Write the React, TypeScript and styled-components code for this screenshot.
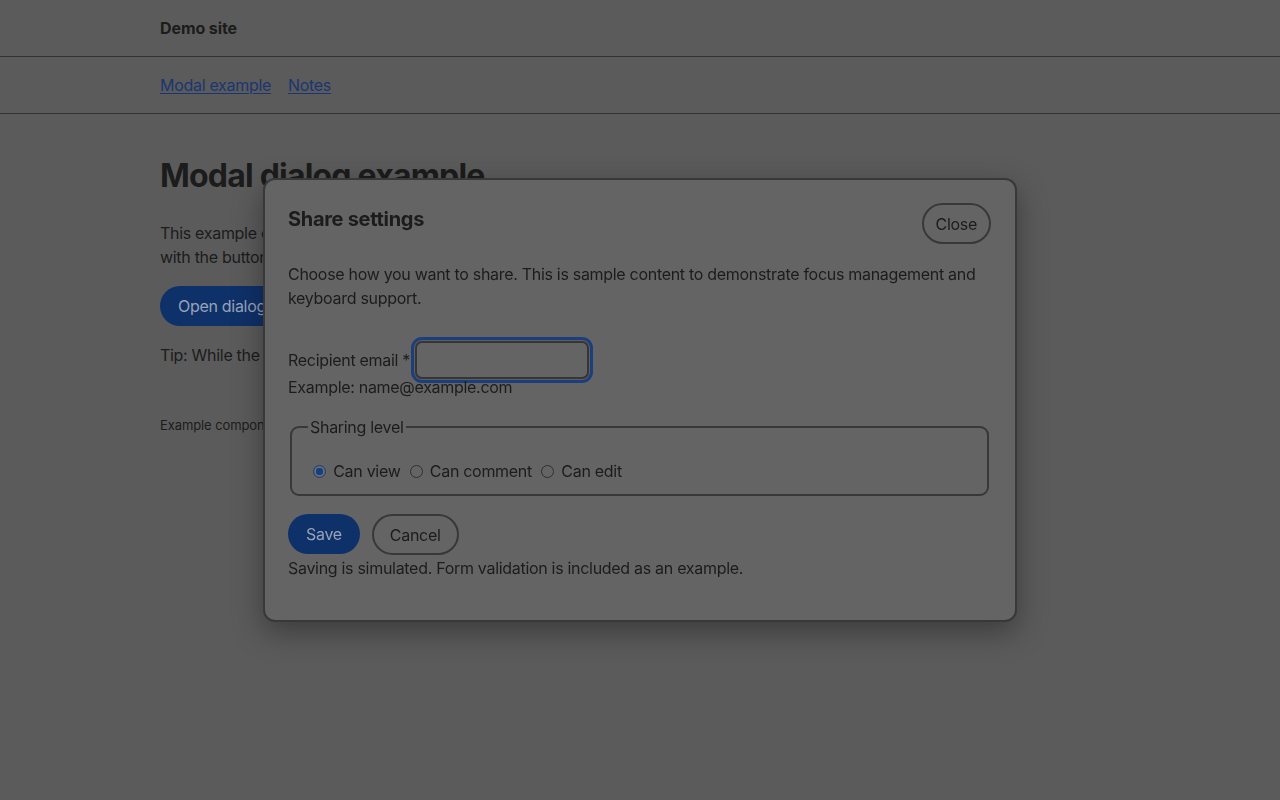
import styled, { createGlobalStyle } from "styled-components";

const GlobalStyle = createGlobalStyle`
  html, body {
    margin: 0;
    background: #5b5b5b;
    color: #1c1c1c;
    font-family: Inter, "Noto Sans", sans-serif;
    font-size: 16px;
    line-height: 24px;
    letter-spacing: -0.3px;
  }
  * {
    box-sizing: border-box;
  }
`;

const Container = styled.div`
  max-width: 960px;
  margin: 0 auto;
`;

const Header = styled.header`
  border-bottom: 1px solid #333;
  padding: 16px 0;
`;

const SiteName = styled.div`
  font-weight: 700;
  letter-spacing: -0.1px;
`;

const Nav = styled.nav`
  border-bottom: 1px solid #333;
  padding: 16px 0;
`;

const NavList = styled.div`
  display: flex;
  gap: 17px;
`;

const NavLink = styled.a`
  color: #1a3670;
  text-decoration: underline;
  text-underline-offset: 2px;
`;

const Main = styled.main`
  padding-top: 42px;
`;

const Title = styled.h1`
  margin: 0 0 25px;
  font-size: 32px;
  line-height: 40px;
  font-weight: 700;
  letter-spacing: -0.8px;
`;

const Text = styled.p<{ $mt?: number }>`
  margin: ${({ $mt }) => $mt ?? 0}px 0 0;
`;

const PrimaryButton = styled.button`
  font: inherit;
  letter-spacing: inherit;
  height: 40px;
  padding: 0 18px;
  border: none;
  border-radius: 999px;
  background: #0f3169;
  color: #98a3b7;
  cursor: pointer;
`;

const OpenButton = styled(PrimaryButton)`
  margin-top: 17px;
`;

const Footer = styled.footer`
  margin-top: 48px;
  font-size: 13px;
  line-height: 20px;
  letter-spacing: -0.1px;
`;

const Overlay = styled.div`
  position: fixed;
  inset: 0;
  display: flex;
  align-items: center;
  justify-content: center;
`;

const Dialog = styled.div`
  width: 754px;
  background: #646464;
  border: 2px solid #383838;
  border-radius: 12px;
  padding: 23px 24px 0 23px;
  box-shadow: 0 10px 30px rgba(0, 0, 0, 0.35);
`;

const DialogHeader = styled.div`
  display: flex;
  justify-content: space-between;
  align-items: flex-start;
`;

const DialogTitle = styled.h2`
  margin: 0;
  padding-top: 2px;
  font-size: 20px;
  line-height: 28px;
  font-weight: 700;
  letter-spacing: -0.3px;
`;

const OutlineButton = styled.button`
  font: inherit;
  letter-spacing: inherit;
  height: 41px;
  padding: 0 12px;
  border: 2px solid #383838;
  border-radius: 999px;
  background: transparent;
  color: #1c1c1c;
  cursor: pointer;
`;

const FieldRow = styled.div`
  margin-top: 31px;
  display: flex;
  align-items: center;
  gap: 5px;
`;

const EmailInput = styled.input`
  width: 174px;
  height: 38px;
  border: 2px solid #363636;
  border-radius: 7px;
  background: transparent;
  box-shadow: 0 0 0 1px #5e5e5e, 0 0 0 4px #1b3f7c;
  outline: none;
`;

const Hint = styled.div`
  line-height: 16px;
`;

const Fieldset = styled.fieldset`
  margin: 20px 2px 0;
  padding: 7px 16px 11px;
  border: 2px solid #383838;
  border-radius: 9px;
`;

const Legend = styled.legend`
  padding: 0 2px;
  line-height: 24px;
`;

const RadioRow = styled.div`
  margin-top: 13px;
`;

const RadioLabel = styled.label`
  white-space: nowrap;
`;

const Radio = styled.input`
  appearance: none;
  width: 13px;
  height: 13px;
  margin: 3px 3px 0 5px;
  border: 1px solid #2f2f2f;
  border-radius: 50%;
  background: transparent;
  vertical-align: -1px;
  &:checked {
    border-color: #1b3f7c;
    background: radial-gradient(circle, #163f80 0 3.5px, #6c717b 4px 4.6px, transparent 5px);
  }
`;

const Actions = styled.div`
  margin-top: 18px;
  display: flex;
  gap: 12px;
`;

const CancelButton = styled(OutlineButton)`
  padding: 0 16px;
`;

const Status = styled.p`
  margin: 1px 0 16px;
  padding-bottom: 24px;
`;

export default function App() {
  return (
    <>
      <GlobalStyle />
      <Header>
        <Container>
          <SiteName>Demo site</SiteName>
        </Container>
      </Header>
      <Nav>
        <Container>
          <NavList>
            <NavLink href="#">Modal example</NavLink>
            <NavLink href="#">Notes</NavLink>
          </NavList>
        </Container>
      </Nav>
      <Main>
        <Container>
          <Title>Modal dialog example</Title>
          <Text>
            This example opens an accessible modal dialog
            <br />
            with the button below.
          </Text>
          <OpenButton>Open dialog</OpenButton>
          <Text $mt={17}>Tip: While the dialog is open, press Escape.</Text>
          <Footer>Example component page</Footer>
        </Container>
      </Main>

      <Overlay>
        <Dialog role="dialog" aria-modal="true" aria-labelledby="dlg-title">
          <DialogHeader>
            <DialogTitle id="dlg-title">Share settings</DialogTitle>
            <OutlineButton>Close</OutlineButton>
          </DialogHeader>
          <Text $mt={18}>
            Choose how you want to share. This is sample content to demonstrate focus management and
            keyboard support.
          </Text>
          <FieldRow>
            <label htmlFor="email">Recipient email *</label>
            <EmailInput id="email" type="email" />
          </FieldRow>
          <Hint>Example: name@example.com</Hint>
          <Fieldset>
            <Legend>Sharing level</Legend>
            <RadioRow>
              <RadioLabel>
                <Radio type="radio" name="level" defaultChecked /> Can view
              </RadioLabel>{" "}
              <RadioLabel>
                <Radio type="radio" name="level" /> Can comment
              </RadioLabel>{" "}
              <RadioLabel>
                <Radio type="radio" name="level" /> Can edit
              </RadioLabel>
            </RadioRow>
          </Fieldset>
          <Actions>
            <PrimaryButton>Save</PrimaryButton>
            <CancelButton>Cancel</CancelButton>
          </Actions>
          <Status>Saving is simulated. Form validation is included as an example.</Status>
        </Dialog>
      </Overlay>
    </>
  );
}
